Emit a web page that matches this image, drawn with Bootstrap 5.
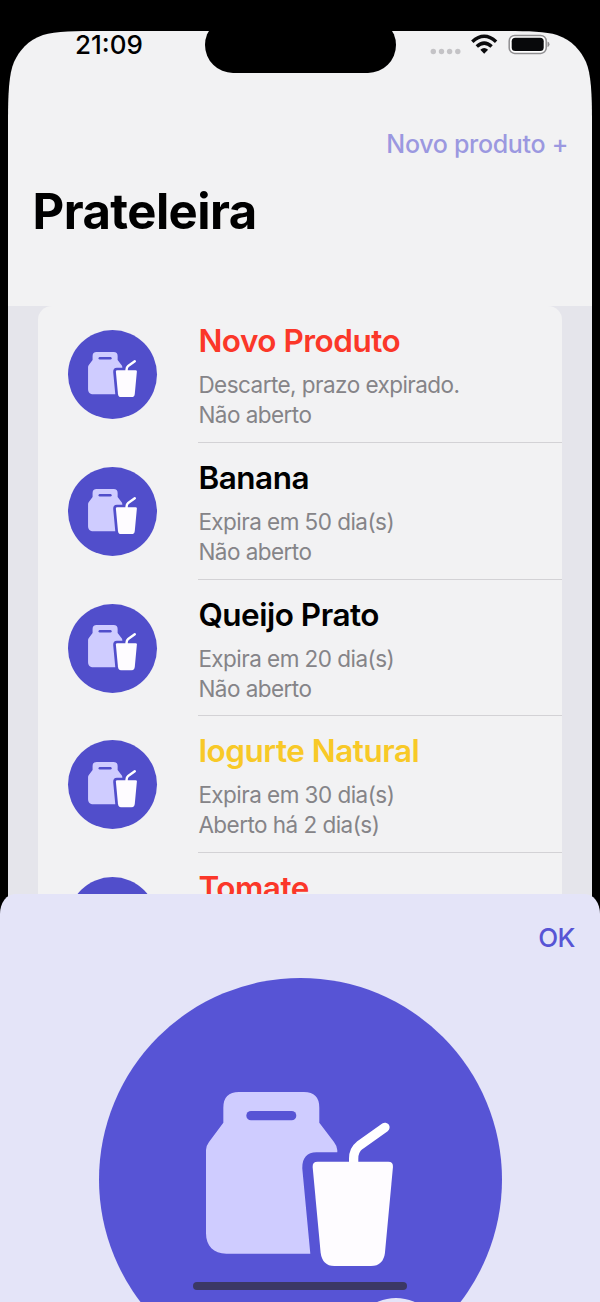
<!DOCTYPE html>
<html lang="pt-BR">
<head>
<meta charset="utf-8">
<meta name="viewport" content="width=device-width, initial-scale=1">
<title>Prateleira</title>
<link href="https://cdn.jsdelivr.net/npm/bootstrap@5.3.0/dist/css/bootstrap.min.css" rel="stylesheet">
<style>
  body { background: #000; font-family: Inter, "Liberation Sans", sans-serif; color: #000; }
  .phone { width: 600px; height: 1302px; background: #000; padding: 31px 8px 0; }
  .screen { height: 1271px; padding-top: 27px; background: #f2f2f3;
    clip-path: path("M0 90 C0 62 1 43 6 31 C11 20 20 9 35 4 C47 0 70 0 92 0 H492 C514 0 537 0 549 4 C564 9 573 20 578 31 C583 43 584 62 584 90 V1271 H0 Z"); }
  .notch { left: 204.5px; top: 17px; width: 191px; height: 56px; border-radius: 28px; background: #000; }
  .statusbar { left: 8px; right: 8px; top: 31px; height: 27px; padding: 0 42px 0 67px; }
  .clock { font-size: 26px; line-height: 27px; font-weight: 500; }
  .add-link { font-size: 25px; line-height: 30px; font-weight: 500; color: #9b98e0; padding: 0; border: 0; letter-spacing: -.32px; }
  .top-actions { padding: 71px 24px 0; }
  .page-title { font-size: 49px; line-height: 60px; font-weight: 700; padding: 23px 24.5px 0; letter-spacing: -.55px; }
  .header-area { height: 248px; }
  .list-area { background: #e5e5eb; height: 996px; padding: 0 30px; }
  .shelf { background: #f2f2f3; border-radius: 14px; }
  .product { height: 136.75px; padding-left: 29.5px; }
  .avatar { width: 89px; height: 89px; margin-top: 24px; background: #514ecb; border-radius: 50%; --cut: #514ecb; }
  .avatar svg { width: 49px; height: 45.5px; }
  .info { margin-left: 41.5px; padding-top: 16px; border-bottom: 1px solid #d3d2d5; }
  .name { font-size: 31.5px; line-height: 38px; font-weight: 600; margin-bottom: 10px; letter-spacing: -.49px; padding-left: .4px; }
  .detail { font-size: 22.5px; line-height: 30px; color: #858488; letter-spacing: -.54px; padding-left: .4px; }
  .expired { color: #fb3729; }
  .opened { color: #f8c927; }
  .sheet { left: 0; top: 894px; width: 600px; height: 408px; background: #e4e4f8; border-radius: 15px 15px 0 0 / 20px 20px 0 0; }
  .ok-link { font-size: 26px; line-height: 30px; font-weight: 500; color: #5754d5; padding: 0; border: 0; letter-spacing: -.5px; }
  .sheet-actions { padding: 29px 25px 0; }
  .hero { width: 403px; height: 403px; margin-top: 25px; background: #5754d5; border-radius: 50%; --cut: #5754d5; }
  .hero svg { width: 187.3px; height: 174.3px; }
  .edit-dot { left: 251.5px; top: 320px; width: 92px; height: 92px; border-radius: 50%; background: #e4e4f8; }
  .home-bar { left: 193px; top: 1282px; width: 214px; height: 8px; border-radius: 4px; background: #3b3864; }
</style>
</head>
<body>
<svg width="0" height="0" class="position-absolute" aria-hidden="true">
  <symbol id="food" viewBox="47 38 562 523">
    <path fill="#cfccff" d="M47 212 Q47 200 56 188 L99 130 V85 Q99 38 146 38 H341 Q387 38 387 85 V130 L431 188 Q441 201 441 213 V219 H378 C350 219 335 237 336 268 L360 523 H108 C70 523 47 500 47 462 Z"/>
    <rect x="168" y="95" width="150" height="28" rx="14" style="fill:var(--cut)"/>
    <path fill="none" stroke="#fff" stroke-width="28" stroke-linecap="round" stroke-linejoin="round" d="M490 255 V238 Q490 212 508 198 L584 144"/>
    <path fill="#fefcff" d="M367 263 Q366 247 382 247 H594 Q609 247 608 263 L584 520 C581 545 567 560 542 560 H432 C408 560 394 545 391 520 Z"/>
  </symbol>
</svg>
<main class="phone position-relative overflow-hidden">
  <div class="screen overflow-hidden">
    <header class="header-area">
      <div class="top-actions d-flex justify-content-end"><button class="btn add-link" type="button">Novo produto +</button></div>
      <h1 class="page-title mb-0">Prateleira</h1>
    </header>
    <section class="list-area">
      <div class="shelf">
        <article class="product d-flex">
          <div class="avatar d-flex align-items-center justify-content-center flex-shrink-0"><svg><use href="#food"/></svg></div>
          <div class="info flex-grow-1"><h2 class="name expired">Novo Produto</h2><div class="detail">Descarte, prazo expirado.</div><div class="detail">Não aberto</div></div>
        </article>
        <article class="product d-flex">
          <div class="avatar d-flex align-items-center justify-content-center flex-shrink-0"><svg><use href="#food"/></svg></div>
          <div class="info flex-grow-1"><h2 class="name">Banana</h2><div class="detail">Expira em 50 dia(s)</div><div class="detail">Não aberto</div></div>
        </article>
        <article class="product d-flex">
          <div class="avatar d-flex align-items-center justify-content-center flex-shrink-0"><svg><use href="#food"/></svg></div>
          <div class="info flex-grow-1"><h2 class="name">Queijo Prato</h2><div class="detail">Expira em 20 dia(s)</div><div class="detail">Não aberto</div></div>
        </article>
        <article class="product d-flex">
          <div class="avatar d-flex align-items-center justify-content-center flex-shrink-0"><svg><use href="#food"/></svg></div>
          <div class="info flex-grow-1"><h2 class="name opened">Iogurte Natural</h2><div class="detail">Expira em 30 dia(s)</div><div class="detail">Aberto há 2 dia(s)</div></div>
        </article>
        <article class="product d-flex">
          <div class="avatar d-flex align-items-center justify-content-center flex-shrink-0"><svg><use href="#food"/></svg></div>
          <div class="info flex-grow-1"><h2 class="name expired">Tomate</h2></div>
        </article>
      </div>
    </section>
  </div>
  <div class="statusbar position-absolute d-flex justify-content-between align-items-center">
    <span class="clock">21:09</span>
    <svg width="121" height="22" viewBox="0 0 121 22">
      <g fill="#c4c3c6"><circle cx="4.3" cy="17.5" r="2.7"/><circle cx="12.5" cy="17.5" r="2.7"/><circle cx="20.6" cy="17.5" r="2.7"/><circle cx="28.8" cy="17.5" r="2.7"/></g>
      <g fill="none" stroke="#0b0b0d" stroke-width="3.5"><path d="M43.3 7.7 Q55.2 -3.2 67.1 7.7"/><path d="M47.8 12.5 Q55.2 5.8 62.6 12.5"/></g>
      <path fill="#0b0b0d" d="M51.3 15.8 Q55.2 12 59.1 15.8 L55.2 19.8 Z"/>
      <rect x="80.2" y="1.4" width="37" height="18" rx="5.5" fill="#fff" stroke="#8f8e90" stroke-width="1.5"/>
      <rect x="82.7" y="3.7" width="32" height="13.4" rx="3.6" fill="#08090b"/>
      <path fill="#8f8e90" d="M118.5 7.6 Q120.5 8.3 120.5 10.3 T118.5 13.2 Z"/>
    </svg>
  </div>
  <div class="notch position-absolute"></div>
  <section class="sheet position-absolute overflow-hidden">
    <div class="sheet-actions d-flex justify-content-end"><button class="btn ok-link" type="button">OK</button></div>
    <div class="hero position-relative mx-auto d-flex align-items-center justify-content-center"><svg><use href="#food"/></svg><span class="edit-dot position-absolute"></span></div>
  </section>
  <div class="home-bar position-absolute"></div>
</main>
<script src="https://cdn.jsdelivr.net/npm/bootstrap@5.3.0/dist/js/bootstrap.bundle.min.js"></script>
</body>
</html>
